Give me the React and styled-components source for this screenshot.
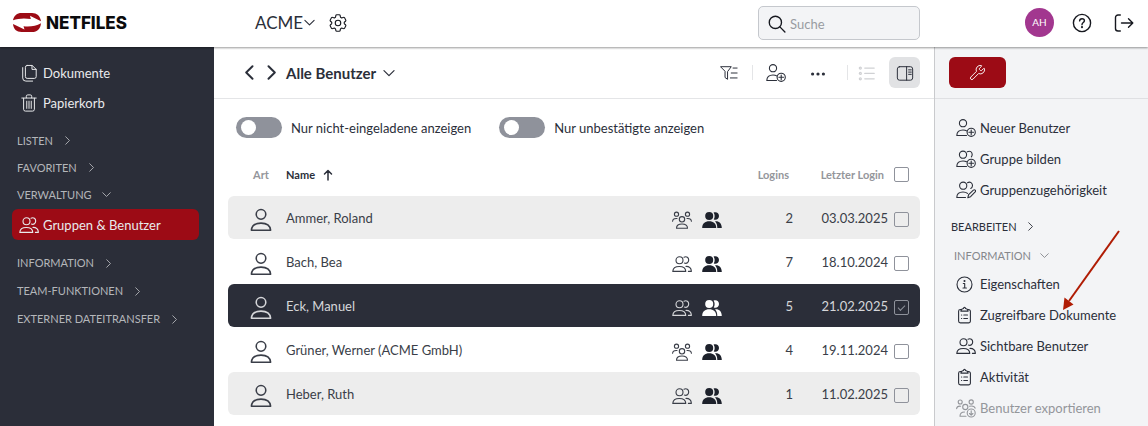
import React, { useState } from "react";
import styled, { createGlobalStyle } from "styled-components";
import { HiOutlineCog6Tooth } from "react-icons/hi2";
import { Wrench } from "lucide-react";

const GlobalStyle = createGlobalStyle`
  *, *::before, *::after {
    box-sizing: border-box;
  }
  body {
    margin: 0;
    background: #ffffff;
    color: #2b2f3a;
    font-family: Lato, "Open Sans", sans-serif;
    font-size: 13px;
    line-height: 20px;
  }
  button, input {
    font: inherit;
    color: inherit;
  }
  button {
    padding: 0;
    border: 0;
    background: none;
    cursor: pointer;
  }
  ul {
    list-style: none;
    margin: 0;
    padding: 0;
  }
`;

/* icons */

const Svg = ({ size = 20, children, ...rest }) => (
  <svg
    width={size}
    height={size}
    viewBox="0 0 20 20"
    fill="none"
    stroke="currentColor"
    strokeWidth="1.1"
    strokeLinecap="round"
    strokeLinejoin="round"
    aria-hidden="true"
    {...rest}
  >
    {children}
  </svg>
);

const ChevronIcon = ({ dir = "right", size = 9, weight = 1.5 }) => (
  <svg
    width={size}
    height={size}
    viewBox="0 0 10 10"
    fill="none"
    stroke="currentColor"
    strokeWidth={weight}
    strokeLinecap="round"
    strokeLinejoin="round"
    aria-hidden="true"
  >
    {dir === "right" && <path d="M3 .8 7.2 5 3 9.2" />}
    {dir === "left" && <path d="M7 .8 2.8 5 7 9.2" />}
    {dir === "down" && <path d="M.8 3 5 7.2 9.2 3" />}
  </svg>
);

const BrandMark = () => (
  <svg width="28" height="19" viewBox="0 0 28 19" aria-hidden="true">
    <path
      fill="#9c0b15"
      d="M0 7.300C.8 2.600 4 0 8.500 0H19c4.800 0 8.200 2.900 9 8.200L17 2.700l.8 3.300C11 4.800 5 5.400 0 7.300Z"
    />
    <path
      fill="#9c0b15"
      d="M28 10.200C27.500 15.800 24.300 19 19 19H8.500C3.600 19 .4 16 0 11l11.500 5.500-1-3.300c7 .8 12.500-.4 17.500-3Z"
    />
  </svg>
);

const DocsIcon = () => (
  <Svg size={18}>
    <path d="M8 1.600h5.500L18 6v8a2 2 0 0 1-2 2H8a2 2 0 0 1-2-2V3.600a2 2 0 0 1 2-2Z" />
    <path d="M13.300 1.800V6H18" />
    <path d="M3 4v11.500A3.500 3.500 0 0 0 6.500 19H14" />
  </Svg>
);

const TrashIcon = () => (
  <Svg size={18}>
    <path d="M2 4.500h16M7 4.300V2.600A1.600 1.600 0 0 1 8.600 1h2.800A1.600 1.600 0 0 1 13 2.600v1.700" />
    <path d="M4 4.700V17a2 2 0 0 0 2 2h8a2 2 0 0 0 2-2V4.700M7.500 8v8M10 8v8M12.500 8v8" />
  </Svg>
);

const PersonIcon = () => (
  <Svg size={24} strokeWidth="1.300">
    <circle cx="10" cy="5.300" r="4" />
    <path d="M2 18.500c.4-4 3.200-5.900 8-5.900s7.600 1.900 8 5.900Z" />
  </Svg>
);

const UsersIcon = () => (
  <Svg>
    <circle cx="7.500" cy="6.300" r="3.500" />
    <path d="M.8 17.400c.2-3.600 2.600-4.900 6.500-4.900s6.300 1.300 6.500 4.900Z" />
    <path d="M12 3.200c2.700-1.200 4.700.5 4.700 2.900 0 2.300-1.900 3.900-4.300 3M14 12.400c3.400 0 5.200 1.600 5.400 5h-3" />
  </Svg>
);

const UsersFillIcon = () => (
  <Svg fill="currentColor" stroke="none">
    <circle cx="7.200" cy="6" r="4" />
    <path d="M.2 18c0-4.600 2.800-6.700 7-6.700s7 2.100 7 6.700Z" />
    <path d="M11.600 2.500c3-1.200 5.400.8 5.400 3.500 0 2.700-2.500 4.500-5.200 3.500 1.200-2.200 1.200-4.800-.2-7Z" />
    <path d="M13 11.200c4.200-.4 6.800 2.200 6.800 6.800h-4.500c0-2.800-.6-5-2.300-6.800Z" />
  </Svg>
);

const TeamIcon = () => (
  <Svg>
    <circle cx="10" cy="9.300" r="2.700" />
    <path d="M4.500 18.200c0-2.800 2-4.200 5.500-4.200s5.500 1.400 5.500 4.200Z" />
    <circle cx="4.500" cy="4.200" r="2.100" />
    <circle cx="15.500" cy="4.200" r="2.100" />
    <path d="M.6 11.300C.8 9.200 2.500 8.300 5 8.500M19.400 11.300c-.2-2.100-1.900-3-4.400-2.800" />
  </Svg>
);

const PersonPlusIcon = () => (
  <Svg>
    <circle cx="7" cy="5.200" r="3.600" />
    <path d="M10.500 17.500H.8c.1-3.700 2.400-5.500 6.200-5.500 1.600 0 2.800.3 3.700.9" />
    <circle cx="15.200" cy="14.300" r="4.100" />
    <path d="M15.200 12v4.600M12.900 14.300h4.600" />
  </Svg>
);

const GroupPlusIcon = () => (
  <Svg>
    <circle cx="7" cy="5.700" r="3.600" />
    <path d="M11.300 2.700c2.800-1.400 4.900.3 4.900 2.900 0 .9-.3 1.600-.8 2.200M10.500 17.500H.8c0-3.800 2.400-5.500 6.200-5.500 1.500 0 2.600.2 3.500.7" />
    <circle cx="15.200" cy="14.300" r="4.100" />
    <path d="M15.200 12v4.600M12.900 14.300h4.600" />
  </Svg>
);

const GroupEditIcon = () => (
  <Svg>
    <circle cx="7.200" cy="5.700" r="3.600" />
    <path d="M11.500 2.700c2.800-1.400 5 .3 5 2.900 0 1.300-.7 2.300-1.700 2.900M9.500 17.500H.8c0-3.800 2.400-5.500 6.200-5.500 2 0 3.500.5 4.500 1.400" />
    <path d="m11.800 17.800.8-3.100 4.800-4.600c1.300-1 2.800.5 1.800 1.800l-4.600 4.800Z" />
  </Svg>
);

const ExportIcon = () => (
  <Svg>
    <circle cx="9.300" cy="9" r="2.600" />
    <path d="M10 18.200H4c0-2.800 1.700-4.100 4.500-4.200" />
    <circle cx="4.200" cy="4" r="2" />
    <circle cx="15.200" cy="4" r="2.100" />
    <path d="M.6 10.800C.8 8.900 2 8 4.600 8.200M13.500 8.200c3-.5 5.200.2 5.600 2" />
    <circle cx="15.200" cy="15" r="4" />
    <path d="M15.200 12.800v4.200M13.500 15.500l1.700 1.700 1.700-1.700" />
  </Svg>
);

const InfoIcon = () => (
  <Svg>
    <circle cx="8.500" cy="10.500" r="7.500" />
    <path d="M7.300 9.500h1.400V14M7 14h3.400" />
    <circle cx="8.500" cy="7" r=".5" fill="currentColor" />
  </Svg>
);

const ClipboardIcon = () => (
  <Svg>
    <path d="M5.500 4.500H4.400a1.800 1.800 0 0 0-1.800 1.800v9.800a1.800 1.800 0 0 0 1.800 1.800h8.200a1.800 1.800 0 0 0 1.800-1.800V6.300a1.800 1.800 0 0 0-1.800-1.800h-1.100" />
    <path d="M4.800 6.100 5.700 4.200l1.700-.6c.3-1.700 1.900-1.700 2.200 0l1.700.6.9 1.900Z" />
    <path d="M5.500 10h.2M7.800 10h3.700M5.500 13.500h.2M7.800 13.500h3.700" />
  </Svg>
);

const SearchIcon = () => (
  <Svg size={18} strokeWidth="1.500">
    <circle cx="8.200" cy="8.200" r="6.800" />
    <path d="m13.200 13.200 5.600 5.600" />
  </Svg>
);

const HelpIcon = () => (
  <Svg strokeWidth="1.400">
    <circle cx="10" cy="10" r="8.600" />
    <path d="M7.600 7.900c.1-3 4.800-2.900 4.800-.1 0 1.700-2.400 1.900-2.400 3.900" />
    <circle cx="10" cy="14.200" r=".4" fill="currentColor" />
  </Svg>
);

const LogoutIcon = () => (
  <Svg strokeWidth="1.400">
    <path d="M6.300 2H4a2.500 2.500 0 0 0-2.500 2.500v11A2.500 2.500 0 0 0 4 18h2.300M7.500 10h11.300M14.500 5.700l4.300 4.300-4.300 4.300" />
  </Svg>
);

const FilterIcon = () => (
  <Svg size={18}>
    <path d="M1 3h11.500L8.400 8.500V17L5.600 15V8.500ZM14.500 4.500H19M12.500 10H19M11.500 15.500H19" />
  </Svg>
);

const DotsIcon = () => (
  <Svg fill="currentColor" stroke="none">
    <circle cx="4.600" cy="11" r="1.600" />
    <circle cx="10" cy="11" r="1.600" />
    <circle cx="15.400" cy="11" r="1.600" />
  </Svg>
);

const ListIcon = () => (
  <Svg size={18} strokeWidth="1.400">
    <circle cx="2.600" cy="4.500" r="1.100" />
    <circle cx="2.600" cy="10.500" r="1.100" />
    <circle cx="2.600" cy="16.500" r="1.100" />
    <path d="M7.500 4.500H18M7.500 10.500H18M7.500 16.500H18" />
  </Svg>
);

const SplitIcon = () => (
  <Svg size={18}>
    <rect x="1.500" y="3" width="17" height="15" rx="2.500" />
    <path d="M11.800 3v15M14 6.500h3M14 9h3M14 11.500h3" />
  </Svg>
);

const SortIcon = () => (
  <svg width="10" height="12" viewBox="0 0 10 12" fill="none" stroke="currentColor" strokeWidth="1.500" strokeLinecap="round" strokeLinejoin="round" aria-hidden="true">
    <path d="M5 11V1.500M1.500 5 5 1.500 8.500 5" />
  </svg>
);

/* data */

const users = [
  { name: "Ammer, Roland", team: true, logins: 2, last: "03.03.2025" },
  { name: "Bach, Bea", team: false, logins: 7, last: "18.10.2024" },
  { name: "Eck, Manuel", team: false, logins: 5, last: "21.02.2025" },
  { name: "Grüner, Werner (ACME GmbH)", team: true, logins: 4, last: "19.11.2024" },
  { name: "Heber, Ruth", team: false, logins: 1, last: "11.02.2025" },
];

const createActions = [
  { label: "Neuer Benutzer", Icon: PersonPlusIcon },
  { label: "Gruppe bilden", Icon: GroupPlusIcon },
  { label: "Gruppenzugehörigkeit", Icon: GroupEditIcon },
];

const infoActions = [
  { label: "Eigenschaften", Icon: InfoIcon },
  { label: "Zugreifbare Dokumente", Icon: ClipboardIcon },
  { label: "Sichtbare Benutzer", Icon: UsersIcon },
  { label: "Aktivität", Icon: ClipboardIcon },
  { label: "Benutzer exportieren", Icon: ExportIcon, disabled: true },
];

const App = () => {
  const [selected, setSelected] = useState(["Eck, Manuel"]);

  const toggleUser = (name) => {
    setSelected((prev) =>
      prev.includes(name) ? prev.filter((n) => n !== name) : [...prev, name]
    );
  };

  return (
    <>
      <GlobalStyle />
      <Page>
        <Header>
          <Brand href="#">
            <BrandMark />
            NETFILES
          </Brand>
          <Workspace>
            ACME
            <ChevronIcon dir="down" size={11} weight={1} />
          </Workspace>
          <HeaderButton aria-label="Einstellungen">
            <HiOutlineCog6Tooth size={22} strokeWidth={1.2} />
          </HeaderButton>
          <SearchBox>
            <SearchIcon />
            <SearchInput type="search" placeholder="Suche" aria-label="Suche" />
          </SearchBox>
          <HeaderTools>
            <Avatar>AH</Avatar>
            <HeaderButton aria-label="Hilfe">
              <HelpIcon />
            </HeaderButton>
            <HeaderButton aria-label="Abmelden">
              <LogoutIcon />
            </HeaderButton>
          </HeaderTools>
        </Header>

        <Body>
          <Sidebar>
            <NavLink href="#">
              <DocsIcon />
              Dokumente
            </NavLink>
            <NavLink href="#">
              <TrashIcon />
              Papierkorb
            </NavLink>
            <NavGroup>
              <NavSection>
                LISTEN <ChevronIcon weight={1} />
              </NavSection>
              <NavSection>
                FAVORITEN <ChevronIcon weight={1} />
              </NavSection>
              <NavSection>
                VERWALTUNG <ChevronIcon dir="down" weight={1} />
              </NavSection>
            </NavGroup>
            <NavLink href="#" $active>
              <UsersIcon />
              Gruppen &amp; Benutzer
            </NavLink>
            <NavGroup $loose>
              <NavSection>
                INFORMATION <ChevronIcon weight={1} />
              </NavSection>
              <NavSection>
                TEAM-FUNKTIONEN <ChevronIcon weight={1} />
              </NavSection>
              <NavSection>
                EXTERNER DATEITRANSFER <ChevronIcon weight={1} />
              </NavSection>
            </NavGroup>
          </Sidebar>

          <Main>
            <Toolbar>
              <PagerButton aria-label="Zurück">
                <ChevronIcon dir="left" size={15} weight={1.3} />
              </PagerButton>
              <PagerButton aria-label="Vor">
                <ChevronIcon size={15} weight={1.3} />
              </PagerButton>
              <TitleButton>
                Alle Benutzer
                <ChevronIcon dir="down" size={12} weight={1} />
              </TitleButton>
              <Actions>
                <IconButton aria-label="Filter">
                  <FilterIcon />
                </IconButton>
                <ActionGroup>
                  <IconButton aria-label="Neuer Benutzer">
                    <PersonPlusIcon />
                  </IconButton>
                  <IconButton aria-label="Mehr">
                    <DotsIcon />
                  </IconButton>
                </ActionGroup>
                <ViewGroup>
                  <IconButton aria-label="Liste" $muted>
                    <ListIcon />
                  </IconButton>
                  <ViewButton aria-label="Seitenleiste">
                    <SplitIcon />
                  </ViewButton>
                </ViewGroup>
              </Actions>
            </Toolbar>

            <Toggles>
              <ToggleLabel>
                <Toggle type="checkbox" role="switch" />
                Nur nicht-eingeladene anzeigen
              </ToggleLabel>
              <ToggleLabel>
                <Toggle type="checkbox" role="switch" />
                Nur unbestätigte anzeigen
              </ToggleLabel>
            </Toggles>

            <Table>
              <colgroup>
                <Col $w={58} />
                <col />
                <Col $w={68} />
                <Col $w={53} />
                <Col $w={95} />
                <Col $w={32} />
              </colgroup>
              <thead>
                <tr>
                  <HeadCell $art>Art</HeadCell>
                  <HeadCell $sorted>
                    <SortButton>
                      Name <SortIcon />
                    </SortButton>
                  </HeadCell>
                  <HeadCell />
                  <HeadCell $right>Logins</HeadCell>
                  <HeadCell $right>Letzter Login</HeadCell>
                  <HeadCell>
                    <Check type="checkbox" aria-label="Alle auswählen" />
                  </HeadCell>
                </tr>
              </thead>
              <tbody>
                {users.map((user) => {
                  const isSelected = selected.includes(user.name);
                  return (
                    <Row key={user.name} $selected={isSelected}>
                      <IconCell $art>
                        <PersonIcon />
                      </IconCell>
                      <Cell>{user.name}</Cell>
                      <IconCell>
                        <MemberIcons>
                          {user.team ? <TeamIcon /> : <UsersIcon />}
                          <Strong $selected={isSelected}>
                            <UsersFillIcon />
                          </Strong>
                        </MemberIcons>
                      </IconCell>
                      <Cell $right>{user.logins}</Cell>
                      <Cell $right>{user.last}</Cell>
                      <IconCell>
                        <Check
                          type="checkbox"
                          aria-label={user.name}
                          checked={isSelected}
                          onChange={() => toggleUser(user.name)}
                        />
                      </IconCell>
                    </Row>
                  );
                })}
              </tbody>
            </Table>
          </Main>

          <Panel>
            <PanelTop>
              <ToolButton aria-label="Werkzeuge">
                <Wrench size={17} strokeWidth={1.3} />
              </ToolButton>
            </PanelTop>
            <PanelBody>
              <ul>
                {createActions.map(({ label, Icon }) => (
                  <li key={label}>
                    <PanelItem>
                      <Icon />
                      {label}
                    </PanelItem>
                  </li>
                ))}
              </ul>
              <PanelSections>
                <PanelSection>
                  BEARBEITEN <ChevronIcon weight={1} />
                </PanelSection>
                <PanelSection $open>
                  INFORMATION <ChevronIcon dir="down" weight={1} />
                </PanelSection>
              </PanelSections>
              <PanelList>
                {infoActions.map(({ label, Icon, disabled }) => (
                  <li key={label}>
                    <PanelItem disabled={disabled}>
                      <Icon />
                      {label}
                    </PanelItem>
                  </li>
                ))}
              </PanelList>
            </PanelBody>
            <Pointer width="60" height="82" viewBox="0 0 60 82" aria-hidden="true">
              <path d="M58 1 8 71" stroke="#b01c04" strokeWidth="2" />
              <path d="M2 80 3.500 67.500 12.500 74.500Z" fill="#b01c04" />
            </Pointer>
          </Panel>
        </Body>
      </Page>
    </>
  );
};

const Page = styled.div`
  display: flex;
  flex-direction: column;
  min-height: 100vh;
`;

const Header = styled.header`
  display: flex;
  align-items: center;
  height: 47px;
  padding-bottom: 2px;
  position: relative;
  z-index: 1;
  background: #ffffff;
  box-shadow: 0 1px 2px rgba(0, 0, 0, 0.4);
`;

const Brand = styled.a`
  display: flex;
  align-items: center;
  gap: 5px;
  width: 255px;
  padding: 0 13px;
  font-family: Inter, sans-serif;
  font-size: 17px;
  font-weight: 800;
  color: #0b0b0d;
  text-decoration: none;
`;

const Workspace = styled.button`
  display: flex;
  align-items: center;
  gap: 1px;
  margin-right: 12px;
  font-size: 17px;
`;

const HeaderButton = styled.button`
  display: flex;
  color: #16181f;
`;

const SearchBox = styled.div`
  display: flex;
  align-items: center;
  gap: 4px;
  width: 162px;
  height: 34px;
  margin-left: auto;
  padding: 2px 9px 0;
  border: 1px solid #c5c8cd;
  border-radius: 5px;
  background: #f3f4f6;
  color: #16181f;
  svg {
    flex: none;
  }
`;

const SearchInput = styled.input`
  width: 100%;
  min-width: 0;
  padding: 0;
  border: 0;
  outline: 0;
  background: none;
  &::placeholder {
    color: #999ca1;
  }
`;

const HeaderTools = styled.div`
  display: flex;
  align-items: center;
  justify-content: flex-end;
  gap: 22px;
  width: 228px;
  padding-right: 14px;
`;

const Avatar = styled.span`
  width: 29px;
  height: 29px;
  margin-right: -4px;
  border-radius: 50%;
  background: #a2378f;
  color: #ffffff;
  font-size: 10px;
  line-height: 29px;
  text-align: center;
`;

const Body = styled.div`
  display: flex;
  flex: 1;
`;

const Sidebar = styled.nav`
  flex: none;
  width: 214px;
  padding: 11px 15px 0 12px;
  background: #2b2e39;
  color: #e9eaec;
`;

const NavLink = styled.a`
  display: flex;
  align-items: center;
  gap: 4px;
  height: ${(props) => (props.$active ? "31px" : "30px")};
  padding: 0 7px;
  border-radius: 6px;
  background: ${(props) => (props.$active ? "#9c0b15" : "none")};
  color: inherit;
  text-decoration: none;
  svg {
    width: 20px;
    flex: none;
  }
`;

const NavSection = styled.button`
  display: flex;
  align-items: center;
  gap: 10px;
  height: 27px;
  font-size: 11px;
  color: #b4b6ba;
`;

const NavGroup = styled.div`
  padding: 9px 5px 1px;
  ${NavSection} {
    height: ${(props) => (props.$loose ? "28px" : "27px")};
  }
`;

const Main = styled.main`
  flex: 1;
  min-width: 0;
`;

const Toolbar = styled.div`
  display: flex;
  align-items: center;
  height: 52px;
  padding: 0 14px 0 28px;
  border-bottom: 1px solid #e4e5e7;
`;

const PagerButton = styled.button`
  display: flex;
  margin-right: 7px;
`;

const TitleButton = styled.button`
  display: flex;
  align-items: center;
  gap: 7px;
  font-size: 15px;
  font-weight: 700;
`;

const Actions = styled.div`
  display: flex;
  align-items: center;
  margin-left: auto;
`;

const ActionGroup = styled.div`
  display: flex;
  align-items: center;
  gap: 18px;
  height: 15px;
  margin-left: 11px;
  padding-left: 11px;
  border-left: 1px solid #e4e5e7;
`;

const ViewGroup = styled(ActionGroup)`
  gap: 10px;
  margin-left: 17px;
  padding-left: 7px;
`;

const IconButton = styled.button`
  display: flex;
  justify-content: center;
  width: 24px;
  color: ${(props) => (props.$muted ? "#d0d1d4" : "#2b2f3a")};
`;

const ViewButton = styled.button`
  display: flex;
  align-items: center;
  justify-content: center;
  width: 31px;
  height: 31px;
  border-radius: 6px;
  background: #e1e2e4;
`;

const Toggles = styled.div`
  display: flex;
  gap: 28px;
  padding: 18px 22px 0;
`;

const ToggleLabel = styled.label`
  display: flex;
  align-items: center;
  gap: 9px;
`;

const Toggle = styled.input`
  appearance: none;
  display: flex;
  align-items: center;
  width: 46px;
  height: 21px;
  margin: 0;
  padding: 0 5px;
  border-radius: 11px;
  background: #8f929b;
  &::before {
    content: "";
    width: 15px;
    height: 15px;
    border-radius: 50%;
    background: #ffffff;
  }
  &:checked {
    justify-content: flex-end;
    background: #9c0b15;
  }
`;

const Table = styled.table`
  table-layout: fixed;
  width: calc(100% - 28px);
  margin: 15px 14px 0;
  border-collapse: separate;
  border-spacing: 0 1px;
`;

const Col = styled.col`
  width: ${(props) => props.$w}px;
`;

const HeadCell = styled.th`
  height: 41px;
  padding: 0;
  padding-left: ${(props) => (props.$art ? "25px" : "0")};
  padding-right: ${(props) => (props.$right ? "4px" : "0")};
  text-align: ${(props) => (props.$right ? "right" : "left")};
  font-size: 11px;
  font-weight: 700;
  color: ${(props) => (props.$sorted ? "#2b2f3a" : "#94969b")};
`;

const SortButton = styled.button`
  display: flex;
  align-items: center;
  gap: 8px;
`;

const Cell = styled.td`
  height: 43px;
  padding: 0;
  text-align: ${(props) => (props.$right ? "right" : "left")};
`;

const IconCell = styled(Cell)`
  padding-top: 4px;
  padding-left: ${(props) => (props.$art ? "21px" : "0")};
  svg {
    display: block;
  }
`;

const Row = styled.tr`
  color: ${(props) => (props.$selected ? "#d5d6d9" : "#3a3e48")};
  td {
    background: ${(props) => (props.$selected ? "#2b2e39" : "#ffffff")};
  }
  &:nth-child(4n + 1) td {
    background: ${(props) => (props.$selected ? "#2b2e39" : "#ededed")};
  }
  td:first-child {
    border-radius: 6px 0 0 6px;
  }
  td:last-child {
    border-radius: 0 6px 6px 0;
  }
`;

const MemberIcons = styled.div`
  display: flex;
  gap: 10px;
`;

const Strong = styled.span`
  color: ${(props) => (props.$selected ? "#ffffff" : "#1d212b")};
`;

const Check = styled.input`
  appearance: none;
  display: grid;
  place-content: center;
  width: 15px;
  height: 15px;
  margin: 0 0 0 6px;
  border: 1px solid #8f929b;
  border-radius: 2px;
  &:checked::before {
    content: "";
    width: 7px;
    height: 4px;
    margin-bottom: 2px;
    border: solid #8f929b;
    border-width: 0 0 1px 1px;
    transform: rotate(-45deg);
  }
`;

const Panel = styled.aside`
  position: relative;
  flex: none;
  width: 214px;
  border-left: 1px solid #c9cacd;
  background: #f3f4f6;
`;

const PanelTop = styled.div`
  display: flex;
  align-items: center;
  height: 52px;
  padding: 0 14px;
  border-bottom: 1px solid #dfe0e3;
`;

const ToolButton = styled.button`
  display: flex;
  align-items: center;
  justify-content: center;
  width: 57px;
  height: 31px;
  border-radius: 6px;
  background: #9c0b15;
  color: #ffffff;
`;

const PanelBody = styled.div`
  padding: 14px 16px 0;
`;

const PanelList = styled.ul`
  margin-top: -1px;
`;

const PanelItem = styled.button`
  display: flex;
  align-items: center;
  gap: 4px;
  height: 30px;
  margin-bottom: 1px;
  padding-left: 5px;
  color: ${(props) => (props.disabled ? "#94969b" : "#2b2f3a")};
`;

const PanelSections = styled.div`
  padding-top: 6px;
`;

const PanelSection = styled.button`
  display: flex;
  align-items: center;
  gap: 9px;
  height: 29px;
  padding-left: ${(props) => (props.$open ? "3px" : "0")};
  font-size: 11px;
  color: ${(props) => (props.$open ? "#85878c" : "#2b2f3a")};
`;

/* hint arrow that lies over the action list */
const Pointer = styled.svg`
  position: absolute;
  top: 183px;
  left: 126px;
  pointer-events: none;
`;

export default App;
